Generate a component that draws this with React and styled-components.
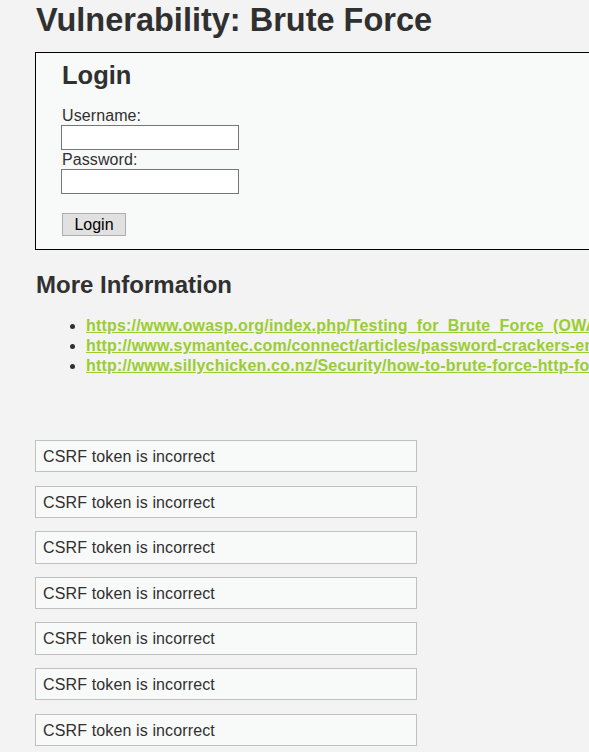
import styled, { createGlobalStyle } from 'styled-components';

const GlobalStyle = createGlobalStyle`
    html, body {
        margin: 0;
        padding: 0;
        background: #f3f3f3;
        overflow: hidden;
    }
    body {
        font-family: 'Liberation Sans', Arial, sans-serif;
        color: #303030;
    }
`

const Page = styled.div`
    width: 900px;
    padding: 2px 0 40px 35px;
`

const Title = styled.h1`
    margin: 0 0 13px 1px;
    font-size: 32.5px;
    line-height: 37px;
    font-weight: bold;
`

const LoginBox = styled.div`
    border: 1px solid #000;
    background: #f8f9f9;
    padding: 8px 25px 13px;
`

const Heading = styled.h2`
    font-size: ${p => p.$size || 24}px;
    line-height: 28px;
    font-weight: bold;
    margin: ${p => p.$top || 0}px 0 ${p => p.$bottom || 0}px 1px;
`

const Label = styled.label`
    display: block;
    font-size: 16px;
    line-height: 18px;
    margin-left: 1px;
    letter-spacing: 0.1px;
`

const Input = styled.input`
    display: block;
    box-sizing: border-box;
    width: 178px;
    height: 25px;
    margin: 0 0 1px;
    border: 1px solid #767676;
    background: #fff;
    padding: 0 2px;
`

const Button = styled.button`
    display: block;
    box-sizing: border-box;
    width: 64px;
    height: 23px;
    margin: 19px 0 0 1px;
    padding: 0;
    border: 1px solid #adadad;
    background: #e1e1e1;
    color: #000;
    font-family: 'Liberation Sans', Arial, sans-serif;
    font-size: 16px;
    line-height: 21px;
`

const Links = styled.ul`
    margin: 17px 0 0;
    padding-left: 51px;
    li {
        font-size: 16px;
        line-height: 20px;
        white-space: nowrap;
    }
    a {
        color: #9acd32;
        font-weight: bold;
        letter-spacing: 0.18px;
        text-decoration: underline;
    }
`

const Messages = styled.div`
    margin-top: 64px;
    display: flex;
    flex-direction: column;
    gap: 13.33px;
`

const Message = styled.div`
    box-sizing: border-box;
    width: 382px;
    border: 1px solid #c0c0c0;
    background: #f8f9f9;
    padding: 6.9px 7px 5.4px;
    font-size: 16px;
    line-height: 18px;
    letter-spacing: 0.13px;
`

const links = [
    'https://www.owasp.org/index.php/Testing_for_Brute_Force_(OWASP-AT-004)',
    'http://www.symantec.com/connect/articles/password-crackers-ensuring-security-your-password',
    'http://www.sillychicken.co.nz/Security/how-to-brute-force-http-forms-in-windows.html',
]

const App = () => {
    return (
        <>
            <GlobalStyle />
            <Page>
                <Title>Vulnerability: Brute Force</Title>
                <LoginBox>
                    <Heading $size={25.5} $bottom={18}>Login</Heading>
                    <Label>Username:</Label>
                    <Input type="text" />
                    <Label>Password:</Label>
                    <Input type="password" />
                    <Button>Login</Button>
                </LoginBox>
                <Heading $top={21}>More Information</Heading>
                <Links>
                    {links.map(l => (
                        <li key={l}><a href={l}>{l}</a></li>
                    ))}
                </Links>
                <Messages>
                    {Array.from({ length: 8 }).map((_, i) => (
                        <Message key={i}>CSRF token is incorrect</Message>
                    ))}
                </Messages>
            </Page>
        </>
    )
}

export default App;
